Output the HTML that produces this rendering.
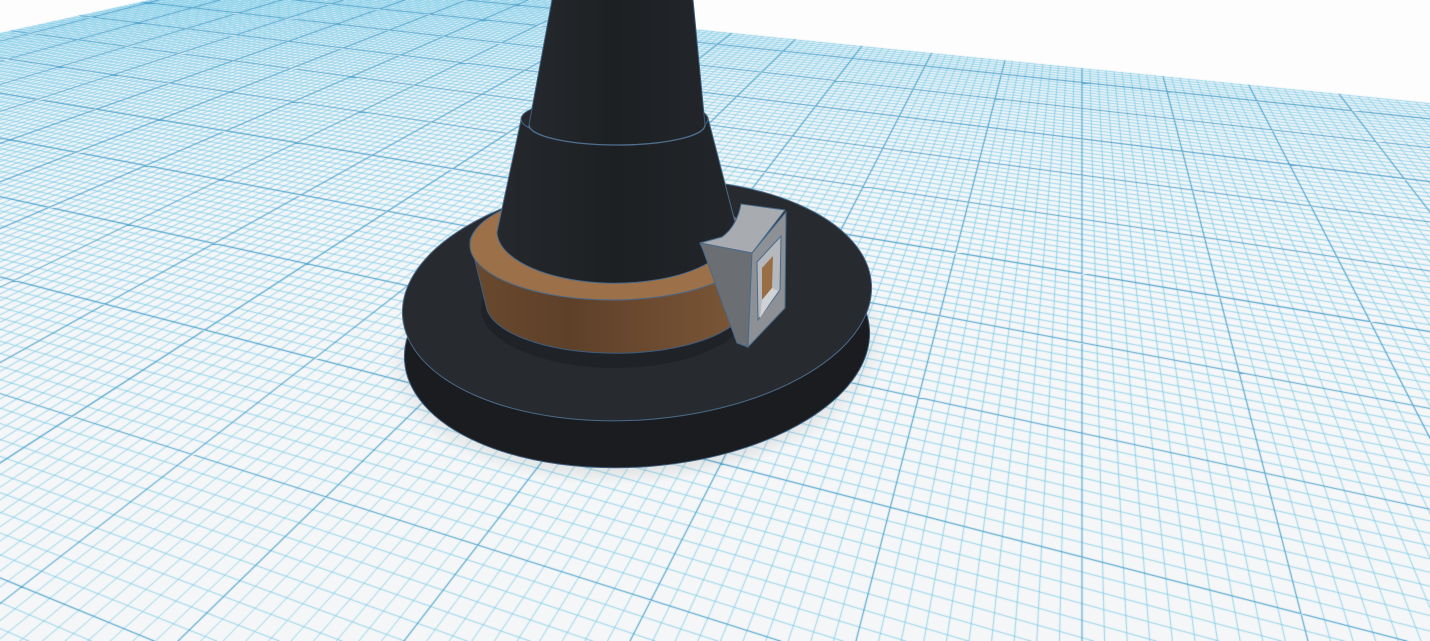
<!DOCTYPE html>
<html><head><meta charset="utf-8"><style>
html,body{margin:0;padding:0;background:#fff;overflow:hidden}
#c{position:absolute;left:0;top:0}
svg{position:absolute;left:0;top:0}
</style></head><body>
<canvas id="c" width="1430" height="641"></canvas>
<svg width="1430" height="641" viewBox="0 0 1430 641">
<defs>
<linearGradient id="band" x1="0" x2="1" y1="0" y2="0">
<stop offset="0" stop-color="#6a4a2e"/><stop offset="0.35" stop-color="#5e4029"/><stop offset="1" stop-color="#7e5838"/></linearGradient>
<linearGradient id="cone" x1="0" x2="1" y1="0" y2="0">
<stop offset="0" stop-color="#25282c"/><stop offset="0.5" stop-color="#1d2023"/><stop offset="1" stop-color="#222529"/></linearGradient>
<radialGradient id="sh" cx="0.5" cy="0.5" r="0.5"><stop offset="0.8" stop-color="#000" stop-opacity="0.12"/><stop offset="1" stop-color="#000" stop-opacity="0"/></radialGradient>
</defs>
<ellipse cx="637" cy="352" rx="250" ry="132" fill="url(#sh)" transform="rotate(-4 637 352)"/>
<ellipse cx="637" cy="345" rx="233" ry="122" fill="#1a1c1f" stroke="#3d5d7d" stroke-width="1" transform="rotate(-4 637 345)"/>
<ellipse cx="637" cy="300" rx="235" ry="120" fill="#272b30" stroke="#4a6a8a" stroke-width="1" transform="rotate(-4 637 300)"/>
<ellipse cx="615" cy="308" rx="134" ry="60" fill="#1f2226"/>
<path d="M470,240 L487,310 A130,50 0 0 0 740,318 L735,270 L755,245 A143,55 0 0 0 470,240 Z" fill="url(#band)" stroke="#3d5d7d" stroke-width="1"/>
<ellipse cx="612" cy="245" rx="142" ry="55" fill="#9c7049" stroke="#4a6a8a" stroke-width="1"/>
<!-- lower cone -->
<path d="M521,120 L497,232 A118,52 0 0 0 710,262 L735,222 L708,118 A94,22 0 0 0 521,120 Z" fill="url(#cone)" stroke="#4a6a8a" stroke-width="1"/>
<ellipse cx="614.5" cy="119" rx="93.5" ry="22" fill="#26292d" stroke="#4a6a8a" stroke-width="1"/>
<!-- upper cone -->
<path d="M552,0 L693,0 L705,125 A88,20 0 0 1 529,125 Z" fill="url(#cone)"/>
<path d="M552,0 L529,125 M693,0 L705,125" stroke="#3d5d7d" stroke-width="1" fill="none"/>
<path d="M529,125 A88,20 0 0 0 705,125" fill="none" stroke="#4f6f8f" stroke-width="1.3"/>
<!-- buckle -->
<path d="M700,243 L722,237 Q737,226 741,204 L785,210 L752,253 Z" fill="#a8acb0" stroke="#4a6a8a" stroke-width="1"/>
<path d="M700,243 L752,253 L748,347 L737,343 L703,250 Z" fill="#6b6f74" stroke="#4a6a8a" stroke-width="1"/>
<path d="M752,253 L786,212 L785,308 L748,347 Z" fill="#8d9196" stroke="#4a6a8a" stroke-width="1"/>
<path d="M757,262 L781,236 L780,290 L758,320 Z" fill="#b5b9bd" stroke="#4a6a8a" stroke-width="1"/>
<path d="M762,268 L773,256 L772,288 L762,300 Z" fill="#9a6e45"/>
<path d="M762,300 L772,288 L778,291 L760,318 Z" fill="#d0d3d6"/>
</svg>
<script>
var c=document.getElementById('c'),g=c.getContext('2d');
g.fillStyle='#fdfdfd';g.fillRect(0,0,1430,641);
g.save();
g.beginPath();g.moveTo(0,33);g.lineTo(150,0);g.lineTo(690,0);g.lineTo(693,29);g.lineTo(1430,103);g.lineTo(1430,641);g.lineTo(0,641);g.closePath();g.clip();
g.fillStyle='#f4f6f7';g.fillRect(0,0,1430,641);
var a=0.184,b=0.0664;
function P(u,v){var d=a*u+b*v+1;return [(1082*a*u-1997*b*v+1082)/d,(-240*a*u-240*b*v+557)/d];}
function line(u1,v1,u2,v2){var p=P(u1,v1),q=P(u2,v2);g.moveTo(p[0],p[1]);g.lineTo(q[0],q[1]);}
var UMIN=-4,UMAX=250,VMIN=-40,VMAX=400;
function draw(major){
 g.beginPath();
 for(var i=UMIN*10;i<=UMAX*10;i++){ if((i%10===0)!==major)continue; var u=i/10;
   var vmin=Math.max(VMIN,(-(1+a*u)+0.02)/b); line(u,vmin,u,VMAX);}
 for(var j=VMIN*10;j<=VMAX*10;j++){ if((j%10===0)!==major)continue; var v=j/10;
   var umin=Math.max(UMIN,(-(1+b*v)+0.02)/a); line(umin,v,UMAX,v);}
 g.stroke();
}
g.lineWidth=1;g.strokeStyle='rgba(110,200,232,0.7)';draw(false);
g.lineWidth=1.1;g.strokeStyle='rgba(50,150,200,0.85)';draw(true);
g.restore();
</script>
</body></html>
